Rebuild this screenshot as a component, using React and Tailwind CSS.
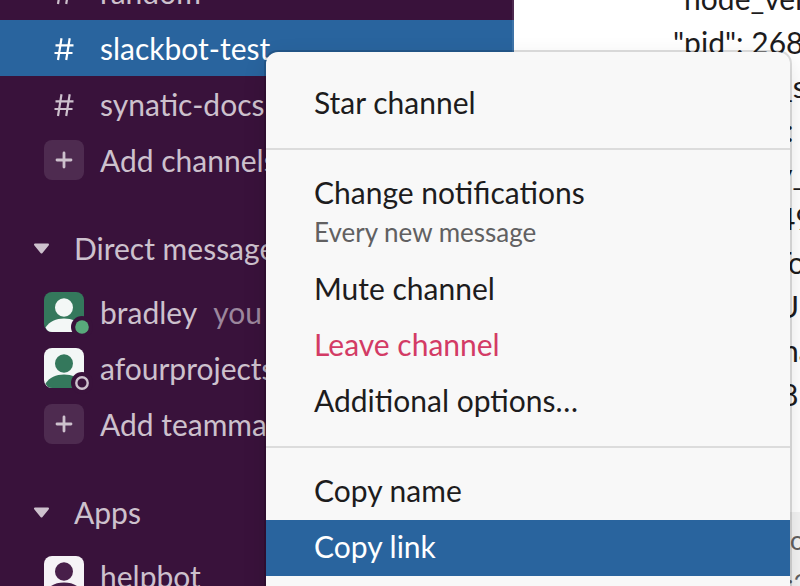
import React from "react";

function Row({ icon, label, note, active }) {
  return (
    <div
      className={
        "flex h-14 shrink-0 items-center pl-11 " +
        (active ? "bg-[#29649e] text-white" : "text-[#cdc1cd]")
      }
    >
      <div className="flex w-10 shrink-0 justify-center">{icon}</div>
      <span className="ml-4 leading-[56px]">{label}</span>
      {note && <span className="ml-4 leading-[56px] text-[#9c879d]">{note}</span>}
    </div>
  );
}

function Header({ label }) {
  return (
    <div className="mt-8 mb-2 flex h-14 shrink-0 items-center pl-[33px] text-[#cdc1cd]">
      <svg width="17" height="12" viewBox="0 0 17 12" className="mt-0.5 shrink-0">
        <path
          d="M2 1.5h13L8.5 9.5z"
          fill="currentColor"
          stroke="currentColor"
          strokeWidth="2"
          strokeLinejoin="round"
        />
      </svg>
      <span className="ml-6 leading-[56px]">{label}</span>
    </div>
  );
}

function Hash() {
  return (
    <svg
      width="20"
      height="24"
      viewBox="0 0 20 24"
      fill="none"
      stroke="currentColor"
      strokeWidth="2.2"
      className="mt-0.5"
    >
      <path d="M7.500 1.300 4 23M15.700 1.300 12.200 23M1.500 8.300H19.500M.5 16H18.500" />
    </svg>
  );
}

function Plus() {
  return (
    <div className="flex size-10 items-center justify-center rounded-lg bg-[#4e2b50]">
      <svg width="18" height="18" viewBox="0 0 18 18" stroke="#cdc1cd" strokeWidth="2.8" strokeLinecap="round">
        <path d="M9 2V16M2 9H16" />
      </svg>
    </div>
  );
}

function Avatar({ bg, fg, status }) {
  return (
    <svg width="40" height="40" viewBox="0 0 40 40" className="overflow-visible">
      <rect width="40" height="40" rx="8" fill={bg} />
      <ellipse cx="20" cy="15.500" rx="9" ry="9.200" fill={fg} />
      <path d="M1.500 35.500C5.500 29.500 12 26.500 20 26.500S34.500 29.500 38.500 35.500Q36.500 40 32 40H8Q3.500 40 1.500 35.500Z" fill={fg} />
      {status && <circle cx="38" cy="35" r="11" fill="#39123b" />}
      {status === "on" && <circle cx="38" cy="35" r="6.800" fill="#58a97b" />}
      {status === "off" && <circle cx="38" cy="35" r="5.700" fill="none" stroke="#cdc1cd" strokeWidth="2.400" />}
    </svg>
  );
}

const lines = [
  ["\"node_version\"", "pl-[159px]"],
  ["\"pid\": 26848", "pl-[159px]"],
  ["_s", "pl-[265px]"],
  [":", "pl-[272px]"],
  ["y_", "pl-[263px]"],
  ["49", "pl-[264px]"],
  ["To", "pl-[260px]"],
  ["U", "pl-[263px]"],
  ["ha", "pl-[268px]"],
  ["8", "pl-[267px]"],
];

function MenuItem({ children, className = "" }) {
  return <div className={"h-14 pl-12 leading-[52px] " + className}>{children}</div>;
}

export default function App() {
  return (
    <div className="relative flex h-[586px] w-[800px] overflow-hidden bg-white font-['Lato','Liberation_Sans',sans-serif] text-[30px] whitespace-nowrap">
      <aside className="flex w-[514px] shrink-0 flex-col bg-[#39123b]">
        <div className="-mt-9 flex flex-col">
          <Row icon={<Hash />} label="random" />
          <Row icon={<Hash />} label="slackbot-test" active />
          <Row icon={<Hash />} label="synatic-docs" />
          <Row icon={<Plus />} label="Add channels" />
          <Header label="Direct messages" />
          <Row icon={<Avatar bg="#34785c" fg="#f3f7f6" status="on" />} label="bradley" note="you" />
          <Row icon={<Avatar bg="#f3f7f6" fg="#34785c" status="off" />} label="afourprojects" />
          <Row icon={<Plus />} label="Add teammates" />
          <Header label="Apps" />
          <Row icon={<Avatar bg="#f5f2f6" fg="#481f4a" />} label="helpbot" />
        </div>
      </aside>
      <div className="absolute top-0 left-[512px] h-full w-0.5 bg-white/10" />

      <main className="flex min-w-0 flex-1 flex-col overflow-hidden text-[#1d1c1d]">
        <div className="-mt-6 h-[536px] shrink-0">
          {lines.map(([text, indent], i) => (
            <div key={i} className={"h-11 leading-[44px] " + indent}>
              {text}
            </div>
          ))}
        </div>
        <div className="h-[74px] shrink-0 bg-[#f3f3f3] pt-1.5 text-[26px] leading-[44px] text-[#616061]">
          <div className="pl-[276px]">o</div>
          <div className="pl-[273px]">:2</div>
        </div>
      </main>

      <div className="absolute top-[52px] left-[266px] w-[524px] rounded-xl bg-[#f8f8f8] pt-6 pb-10 text-[#1d1c1d] shadow-[0_0_0_2px_rgba(0,0,0,0.13),0_8px_24px_rgba(0,0,0,0.12)]">
        <MenuItem>Star channel</MenuItem>
        <hr className="my-4 border-t-2 border-[#dcdcdc]" />
        <div className="h-24 pl-12">
          <div className="h-[46px] leading-[52px]">Change notifications</div>
          <div className="text-[26px] leading-[40px] text-[#616061]">Every new message</div>
        </div>
        <MenuItem>Mute channel</MenuItem>
        <MenuItem className="text-[#d33b65]">Leave channel</MenuItem>
        <MenuItem>Additional options…</MenuItem>
        <hr className="my-4 border-t-2 border-[#dcdcdc]" />
        <MenuItem>Copy name</MenuItem>
        <MenuItem className="bg-[#29649e] text-white">Copy link</MenuItem>
      </div>
    </div>
  );
}
